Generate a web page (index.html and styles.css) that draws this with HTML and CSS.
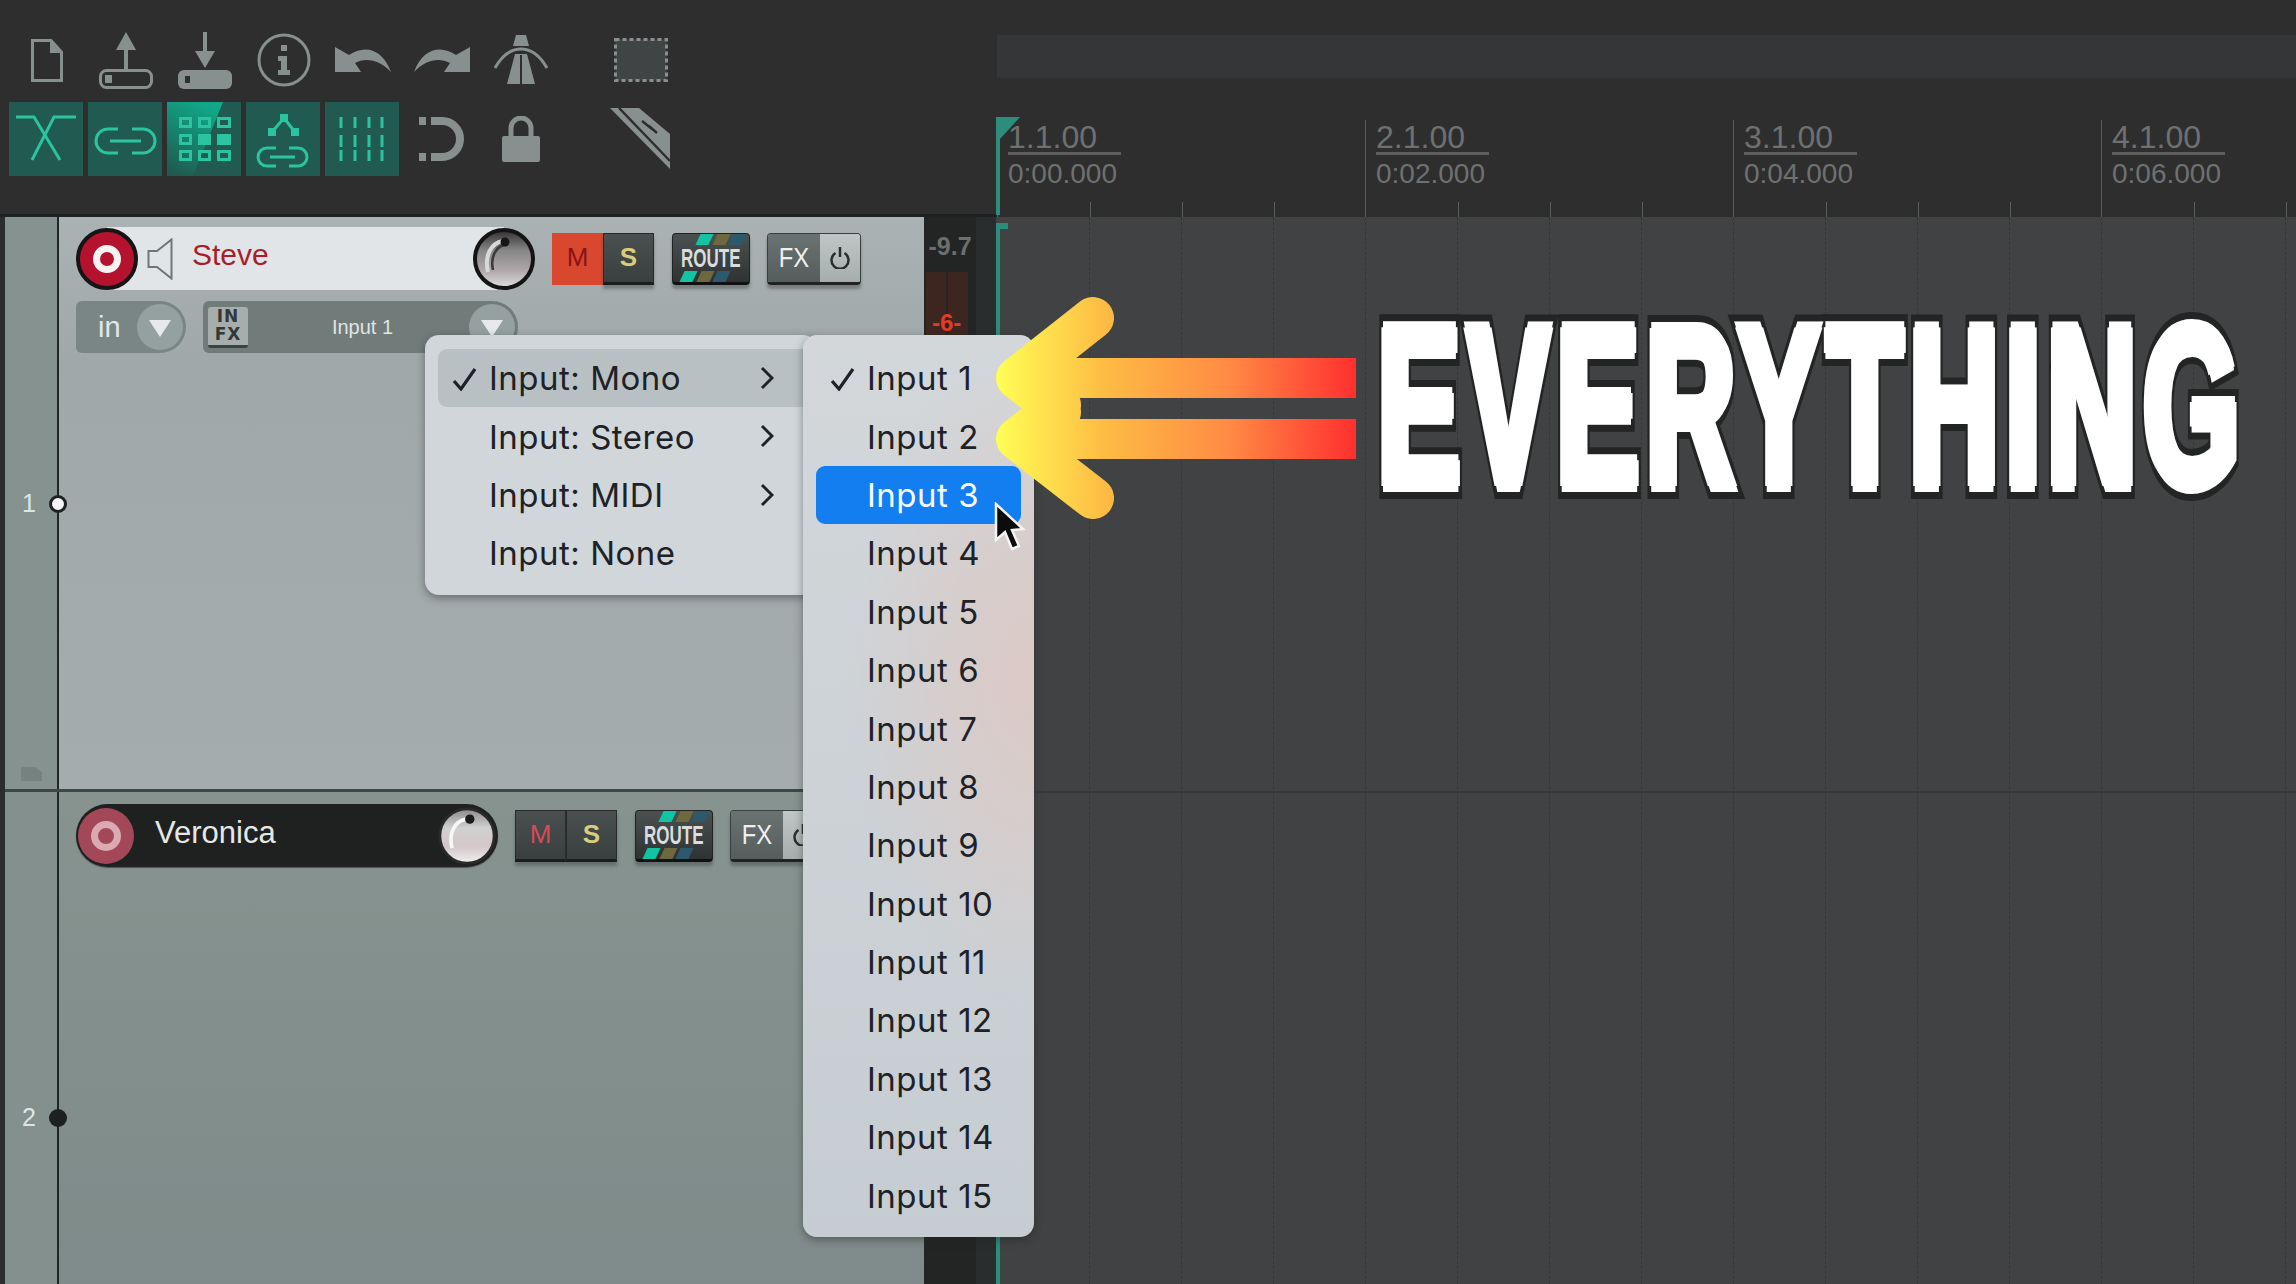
FILE: index.html
```html
<!DOCTYPE html>
<html lang="en">
<head>
    <meta charset="UTF-8">
    <title>Track input menu</title>
    <link rel="stylesheet" href="styles.css">
</head>
<body>

<div class="app">

    <div class="top">
        <div class="toolbar">
            <div class="tool-row">
                <div class="tool"><svg width="32" height="43" viewBox="0 0 32 43"><path d="M1.5 1.5H20L30.5 13V41.5H1.5Z" fill="none" stroke="#87908f" stroke-width="3"/><path d="M19 2V14H30Z" fill="#87908f"/></svg></div>
                <div class="tool"><svg width="54" height="57" viewBox="0 0 54 57"><path d="M27 0L37 18H29V37H25V18H17Z" fill="#87908f"/><rect x="1.5" y="38.5" width="51" height="17" rx="6" fill="none" stroke="#87908f" stroke-width="3"/><rect x="6" y="43" width="7" height="8" fill="#87908f"/></svg></div>
                <div class="tool"><svg width="54" height="57" viewBox="0 0 54 57"><path d="M25 0H29V19H37L27 36L17 19H25Z" fill="#87908f"/><rect y="38" width="54" height="19" rx="6" fill="#87908f"/><rect x="7" y="44" width="5" height="7" fill="#2e2e2e"/></svg></div>
                <div class="tool"><svg width="54" height="54" viewBox="0 0 54 54"><circle cx="27" cy="27" r="25" fill="none" stroke="#87908f" stroke-width="3"/><path d="M24 12h6v6h-6zM21 23h9v14h3v5H21v-5h3v-9h-3z" fill="#87908f"/></svg></div>
                <div class="tool"><svg width="56" height="26" viewBox="0 0 56 26"><path d="M0 0L14 8C28 -2 47 0 56 25C45 13 31 10 20 16L26 25H0Z" fill="#87908f"/></svg></div>
                <div class="tool"><svg width="56" height="26" viewBox="0 0 56 26"><path d="M56 0L42 8C28 -2 9 0 0 25C11 13 25 10 36 16L30 25H56Z" fill="#87908f"/></svg></div>
                <div class="tool"><svg width="54" height="50" viewBox="0 0 54 50"><path d="M22 0H32L35 11H19Z" fill="#87908f"/><path d="M1 33C9 19 17 14 27 14C37 14 45 19 53 33" fill="none" stroke="#87908f" stroke-width="3"/><path d="M21 19H33L41 49H13Z" fill="#87908f"/><rect x="26" y="20" width="2" height="29" fill="#2e2e2e"/></svg></div>
                <div class="tool tool-far"><svg width="54" height="44" viewBox="0 0 54 44"><rect x="1.5" y="1.5" width="51" height="41" fill="#404445" stroke="#87908f" stroke-width="3" stroke-dasharray="4 3"/></svg></div>
            </div>
            <div class="tool-row tool-row-b">
                <div class="tool on"><svg width="74" height="74" viewBox="0 0 74 74"><path d="M7 15H25L51 58M67 15H45L23 58" fill="none" stroke="#2ac4a0" stroke-width="3"/></svg></div>
                <div class="tool on"><svg width="74" height="74" viewBox="0 0 74 74"><path d="M30 27H20a12 12 0 0 0 0 24H30M44 27H55a12 12 0 0 1 0 24H44M22 39H53" fill="none" stroke="#2ac4a0" stroke-width="3"/></svg></div>
                <div class="tool on"><svg width="74" height="74" viewBox="0 0 74 74"><defs><linearGradient id="wedge" x1="0.6" y1="0" x2="0.2" y2="1"><stop offset="0" stop-color="#10a888"/><stop offset="1" stop-color="#10a888" stop-opacity="0"/></linearGradient></defs><path d="M0 0H56L26 74H0Z" fill="url(#wedge)"/><g fill="none" stroke="#2ac4a0" stroke-width="3"><rect x="13.5" y="16.5" width="10" height="8"/><rect x="32.5" y="16.5" width="10" height="8"/><rect x="51.5" y="16.5" width="11" height="8"/><rect x="13.5" y="33.5" width="10" height="8"/><rect x="13.5" y="49.5" width="10" height="8"/><rect x="32.5" y="49.5" width="10" height="8"/><rect x="51.5" y="49.5" width="11" height="8"/></g><rect x="31" y="32" width="13" height="11" fill="#2ac4a0"/><rect x="50" y="32" width="14" height="11" fill="#2ac4a0"/></svg></div>
                <div class="tool on"><svg width="74" height="74" viewBox="0 0 74 74"><path d="M26 30L38 16L49 30" fill="none" stroke="#2ac4a0" stroke-width="3"/><path d="M34 12h8v8h-8zM22 26h8v8h-8zM45 26h8v8h-8z" fill="#2ac4a0"/><path d="M30 46H21a9 9 0 0 0 0 18H30M43 46H52a9 9 0 0 1 0 18H43M24 55H49" fill="none" stroke="#2ac4a0" stroke-width="3"/></svg></div>
                <div class="tool on"><svg width="74" height="74" viewBox="0 0 74 74"><path d="M16 15V26M30 15V26M44 15V26M57 15V26M16 33V45M30 33V45M44 33V45M57 33V45M16 48V59M30 48V59M44 48V59M57 48V59" fill="none" stroke="#2ac4a0" stroke-width="3"/></svg></div>
                <div class="tool"><svg width="46" height="46" viewBox="0 0 46 46"><path d="M12 5H23a18 18 0 0 1 0 36H12" fill="none" stroke="#87908f" stroke-width="8"/><rect x="0" y="1" width="7" height="8" fill="#87908f"/><rect x="0" y="37" width="7" height="8" fill="#87908f"/></svg></div>
                <div class="tool"><svg width="38" height="46" viewBox="0 0 38 46"><path d="M9 22V12a10 10 0 0 1 20 0V22" fill="none" stroke="#87908f" stroke-width="5"/><rect y="20" width="38" height="26" rx="2" fill="#87908f"/></svg></div>
                <div class="tool tool-far"><svg width="62" height="62" viewBox="0 0 62 62"><path d="M0 0H29L60 26V61Z" fill="#87908f"/><path d="M9 0L60 53M42 21L32 13M47 25L39 18" fill="none" stroke="#2e2e2e" stroke-width="2.5"/></svg></div>
            </div>
        </div>

        <div class="timeline">
            <div class="band"></div>
            <div class="measures">
                <div class="measure">
                    <div class="label"><div class="bar-num">1.1.00</div><div class="bar-time">0:00.000</div></div>
                    <div class="ticks"><span></span><span></span><span></span></div>
                </div>
                <div class="measure">
                    <div class="label"><div class="bar-num">2.1.00</div><div class="bar-time">0:02.000</div></div>
                    <div class="ticks"><span></span><span></span><span></span></div>
                </div>
                <div class="measure">
                    <div class="label"><div class="bar-num">3.1.00</div><div class="bar-time">0:04.000</div></div>
                    <div class="ticks"><span></span><span></span><span></span></div>
                </div>
                <div class="measure">
                    <div class="label"><div class="bar-num">4.1.00</div><div class="bar-time">0:06.000</div></div>
                    <div class="ticks"><span></span><span></span><span></span></div>
                </div>
            </div>
            <svg class="flag" width="24" height="98" viewBox="0 0 24 98"><path d="M0 0H24L4 22V98H0Z" fill="#2c8d7c"/></svg>
        </div>
    </div>

    <div class="main">
        <div class="tcp">
            <!-- track 1 -->
            <div class="track track-one">
                <div class="strip">
                    <span class="track-num">1</span>
                    <span class="folder"></span>
                </div>
                <div class="panel">
                    <div class="strip-row">
                        <div class="name-pill">
                            <div class="rec"></div>
                            <svg class="speaker" width="26" height="42" viewBox="0 0 26 42"><path d="M1.5 13H10L24.5 1.5V40.5L10 29H1.5Z" fill="none" stroke="#6e7676" stroke-width="2"/></svg>
                            <span class="track-name">Steve</span>
                            <svg class="knob" width="62" height="62" viewBox="0 0 62 62">
                                <defs>
                                    <linearGradient id="steel" x1="0" y1="0" x2="0" y2="1"><stop offset="0" stop-color="#2f2f2f"/><stop offset="0.35" stop-color="#868686"/><stop offset="0.7" stop-color="#b0a8aa"/><stop offset="1" stop-color="#e0e0e0"/></linearGradient>
                                </defs>
                                <circle cx="31" cy="31" r="29" fill="url(#steel)" stroke="#141414" stroke-width="4"/>
                                <path d="M30 13C18 15 11 28 15 44" fill="none" stroke="#d8d8d8" stroke-width="4"/>
                                <path d="M31 17C23 19 17 29 20 42" fill="none" stroke="#3a3a3a" stroke-width="2.5"/>
                                <circle cx="32" cy="14" r="4.5" fill="#161616"/>
                            </svg>
                        </div>
                        <div class="btn-pair">
                            <div class="btn btn-m active">M</div>
                            <div class="btn btn-s">S</div>
                        </div>
                        <div class="btn-route"><i class="dash teal"></i><i class="dash olive"></i><i class="dash blue"></i><span>ROUTE</span><i class="dash low teal"></i><i class="dash low olive"></i><i class="dash low blue"></i></div>
                        <div class="btn-fx"><span class="fx-label"><b>FX</b></span><span class="fx-power"><svg width="20" height="22" viewBox="0 0 20 22"><path d="M5.5 6A8.5 8.5 0 1 0 14.5 6M10 0V10" fill="none" stroke="#2a2e2e" stroke-width="2.5"/></svg></span></div>
                    </div>
                    <div class="input-row">
                        <div class="in-pill">in<span class="drop"></span></div>
                        <div class="input-pill">
                            <div class="infx">IN<br>FX</div>
                            <span class="input-name">Input 1</span>
                            <span class="drop"></span>
                        </div>
                    </div>
                </div>
            </div>
            <!-- track 2 -->
            <div class="track track-two">
                <div class="strip">
                    <span class="track-num">2</span>
                </div>
                <div class="panel">
                    <div class="strip-row">
                        <div class="name-pill dark">
                            <div class="rec"></div>
                            <span class="track-name">Veronica</span>
                            <svg class="knob" width="58" height="58" viewBox="0 0 62 62">
                                <defs>
                                    <linearGradient id="silver" x1="0" y1="0" x2="0" y2="1"><stop offset="0" stop-color="#8a8a8a"/><stop offset="0.35" stop-color="#d0d0d0"/><stop offset="0.7" stop-color="#d4c8ca"/><stop offset="1" stop-color="#f0f0f0"/></linearGradient>
                                </defs>
                                <circle cx="31" cy="31" r="29" fill="url(#silver)" stroke="#2a2a2a" stroke-width="3"/>
                                <path d="M30 13C18 15 11 28 15 44" fill="none" stroke="#f6f6f6" stroke-width="4"/>
                                <circle cx="34" cy="13" r="5" fill="#1c1c1c"/>
                            </svg>
                        </div>
                        <div class="btn-pair">
                            <div class="btn btn-m">M</div>
                            <div class="btn btn-s">S</div>
                        </div>
                        <div class="btn-route"><i class="dash teal"></i><i class="dash olive"></i><i class="dash blue"></i><span>ROUTE</span><i class="dash low teal"></i><i class="dash low olive"></i><i class="dash low blue"></i></div>
                        <div class="btn-fx"><span class="fx-label"><b>FX</b></span><span class="fx-power"><svg width="20" height="22" viewBox="0 0 20 22"><path d="M5.5 6A8.5 8.5 0 1 0 14.5 6M10 0V10" fill="none" stroke="#2a2e2e" stroke-width="2.5"/></svg></span></div>
                    </div>
                </div>
            </div>
        </div>

        <div class="meter-col">
            <div class="readout">-9.7</div>
            <div class="meter">
                <span class="meter-side"></span><span class="meter-side"></span>
                <span class="meter-mark">-6-</span>
            </div>
        </div>

        <div class="arrange">
            <div class="beat"></div><div class="beat"></div><div class="beat"></div><div class="beat"></div>
            <div class="beat"></div><div class="beat"></div><div class="beat"></div><div class="beat"></div>
            <div class="beat"></div><div class="beat"></div><div class="beat"></div><div class="beat"></div>
            <div class="beat"></div><div class="beat"></div><div class="beat"></div>
            <div class="playhead"></div>
        </div>
    </div>

    <!-- track dots sit over the divider line -->
    <span class="dot dot-one"></span>
    <span class="dot dot-two"></span>

    <!-- popup menus -->
    <div class="menu menu-type">
        <div class="menu-item hover"><svg class="check" width="25" height="24" viewBox="0 0 25 24"><path d="M2 14L9 22L23 2" fill="none" stroke="#1e2226" stroke-width="3.2"/></svg><span>Input: Mono</span><svg class="chev" width="14" height="24" viewBox="0 0 14 24"><path d="M2 2L12 12L2 22" fill="none" stroke="#1e2226" stroke-width="3"/></svg></div>
        <div class="menu-item"><span>Input: Stereo</span><svg class="chev" width="14" height="24" viewBox="0 0 14 24"><path d="M2 2L12 12L2 22" fill="none" stroke="#1e2226" stroke-width="3"/></svg></div>
        <div class="menu-item"><span>Input: MIDI</span><svg class="chev" width="14" height="24" viewBox="0 0 14 24"><path d="M2 2L12 12L2 22" fill="none" stroke="#1e2226" stroke-width="3"/></svg></div>
        <div class="menu-item"><span>Input: None</span></div>
    </div>

    <div class="menu menu-inputs">
        <div class="menu-item"><svg class="check" width="25" height="24" viewBox="0 0 25 24"><path d="M2 14L9 22L23 2" fill="none" stroke="#1e2226" stroke-width="3.2"/></svg><span>Input 1</span></div>
        <div class="menu-item"><span>Input 2</span></div>
        <div class="menu-item selected"><span>Input 3</span></div>
        <div class="menu-item"><span>Input 4</span></div>
        <div class="menu-item"><span>Input 5</span></div>
        <div class="menu-item"><span>Input 6</span></div>
        <div class="menu-item"><span>Input 7</span></div>
        <div class="menu-item"><span>Input 8</span></div>
        <div class="menu-item"><span>Input 9</span></div>
        <div class="menu-item"><span>Input 10</span></div>
        <div class="menu-item"><span>Input 11</span></div>
        <div class="menu-item"><span>Input 12</span></div>
        <div class="menu-item"><span>Input 13</span></div>
        <div class="menu-item"><span>Input 14</span></div>
        <div class="menu-item"><span>Input 15</span></div>
    </div>

    <!-- thumbnail overlay: arrows + big word -->
    <svg class="arrows" width="400" height="260" viewBox="980 280 400 260">
        <defs>
            <linearGradient id="hot" gradientUnits="userSpaceOnUse" x1="995" y1="0" x2="1356" y2="0">
                <stop offset="0" stop-color="#ffff55"/>
                <stop offset="0.3" stop-color="#fdbc44"/>
                <stop offset="0.65" stop-color="#ff8a45"/>
                <stop offset="1" stop-color="#ff2f2f"/>
            </linearGradient>
        </defs>
        <path d="M1040 358H1356V398H1040ZM1040 419H1356V459H1040Z" fill="url(#hot)"/>
        <path d="M1093 318L1017 378L1060 412M1093 498L1017 439L1060 405" fill="none" stroke="url(#hot)" stroke-width="42" stroke-linecap="round" stroke-linejoin="round"/>
    </svg>
    <svg class="cursor" width="32" height="50" viewBox="0 0 32 50"><path d="M2 2V38L11 30L18 47L25 44L18 28L29 27Z" fill="#0c0c0c" stroke="#f4f4f4" stroke-width="2.5"/></svg>

    <div class="headline" data-text="EVERYTHING"><span>EVERYTHING</span></div>
</div>

</body>
</html>
```

FILE: styles.css
```css
body {
    margin: 0;
    background: #2e2e2e;
    font-family: "Liberation Sans", Arial, sans-serif;
}

.app {
    position: relative;
    width: 2296px;
    height: 1284px;
    overflow: hidden;
    display: grid;
    grid-template-rows: 217px 1fr;
    background: #2e2f2f;
}

/* top area */
.top {
    display: flex;
    background: #2e2e2e;
}

.toolbar {
    width: 997px;
    flex: none;
    padding: 28px 0 0 7px;
    box-sizing: border-box;
    border-bottom: 3px solid #1f2222;
}

.tool-row {
    display: flex;
    height: 64px;
    align-items: center;
}

.tool-row-b {
    margin-top: 10px;
    height: 74px;
}

.tool {
    width: 79px;
    flex: none;
    display: flex;
    align-items: center;
    justify-content: center;
}

.tool.on {
    width: 74px;
    height: 74px;
    margin: 0 3px 0 2px;
    background: #205a50;
}

.tool-far {
    margin-left: 41px;
}

.timeline {
    position: relative;
    flex: 1;
    padding-top: 35px;
}

.band {
    height: 43px;
    background: #353637;
}

.measures {
    display: flex;
    margin-top: 42px;
    height: 97px;
}

.measure {
    width: 368px;
    flex: none;
    box-sizing: border-box;
    border-left: 1px solid #5c5d5d;
    padding-left: 10px;
    display: flex;
    flex-direction: column;
    justify-content: space-between;
}

.label {
    width: 113px;
    color: #6f7070;
}

.bar-num {
    font-size: 32px;
    line-height: 34px;
    height: 32px;
    border-bottom: 3px solid #5e5e5e;
}

.bar-time {
    font-size: 28px;
    line-height: 32px;
    margin-top: 3px;
}

.ticks {
    display: flex;
    margin-left: 82px;
    height: 15px;
}

.ticks span {
    width: 91px;
    flex: none;
    border-left: 1px solid #5c5d5d;
}

.flag {
    position: absolute;
    left: -1px;
    top: 117px;
    display: block;
}

/* main area */
.main {
    display: flex;
    padding-left: 5px;
    min-height: 0;
    background: #2a2d2d;
}

.tcp {
    width: 919px;
    flex: none;
    display: flex;
    flex-direction: column;
}

.track {
    display: flex;
}

.track-one {
    height: 575px;
    border-bottom: 3px solid #3d4747;
    box-sizing: border-box;
}

.track-two {
    flex: 1;
}

.strip {
    position: relative;
    width: 52px;
    flex: none;
    background: #86928f;
    border-right: 2px solid #1e2626;
}

.track-two .strip {
    background: #83908e;
}

.track-num {
    position: absolute;
    left: 17px;
    color: #dfe5e4;
    font-size: 25px;
}

.track-one .track-num {
    top: 272px;
}

.track-two .track-num {
    top: 311px;
}

.folder {
    position: absolute;
    left: 16px;
    top: 550px;
    width: 21px;
    height: 14px;
    background: #76827f;
    clip-path: polygon(0 0, 65% 0, 100% 35%, 100% 100%, 0 100%);
}

.panel {
    flex: 1;
    padding: 10px 0 0 17px;
}

.track-one .panel {
    background: linear-gradient(#aab2b3, #a0a8a9 25%, #a5acad);
}

.track-two .panel {
    background: linear-gradient(#87938f, #7f8b8a);
    padding-top: 12px;
}

.strip-row {
    display: flex;
    align-items: center;
    height: 63px;
}

.name-pill {
    position: relative;
    width: 460px;
    height: 63px;
    flex: none;
    display: flex;
    align-items: center;
    background: linear-gradient(90deg, transparent 31px, #e2e5e7 31px, #e2e5e7 428px, transparent 428px);
}

.name-pill.dark {
    width: 422px;
    background: #1f2120;
    border-radius: 32px;
    box-shadow: 0 1px 1px #555;
}

.rec {
    position: relative;
    width: 62px;
    height: 62px;
    flex: none;
    box-sizing: border-box;
    border-radius: 50%;
    background: #b5122f;
    border: 4px solid #151515;
}

.rec::after {
    content: "";
    position: absolute;
    left: 13px;
    top: 13px;
    width: 28px;
    height: 28px;
    box-sizing: border-box;
    border-radius: 50%;
    border: 7px solid #f6f2f2;
}

.dark .rec {
    width: 56px;
    height: 56px;
    margin-left: 2px;
    background: #a24858;
    border: none;
}

.dark .rec::after {
    left: 13px;
    top: 13px;
    width: 30px;
    height: 30px;
    border-color: #dba9b2;
}

.speaker {
    margin-left: 9px;
    flex: none;
}

.track-name {
    margin-left: 19px;
    font-size: 30px;
    color: #a61f2b;
    position: relative;
    top: -4px;
}

.dark .track-name {
    margin-left: 21px;
    font-size: 31px;
    color: #e6e8e6;
    top: -3px;
}

.knob {
    flex: none;
    margin-left: auto;
    margin-right: 1px;
}

.dark .knob {
    margin-right: 2px;
}

.track-one .btn-pair {
    margin-left: 16px;
}

.track-two .btn-pair {
    margin-left: 17px;
}

.btn-pair {
    display: flex;
    flex: none;
}

.btn {
    box-sizing: border-box;
    height: 52px;
    width: 51px;
    display: flex;
    align-items: center;
    justify-content: center;
    font-size: 26px;
    background: linear-gradient(#4a5050, #3a3f3f);
    border: 1px solid #262a2a;
    border-bottom: 3px solid #1a1d1d;
    box-shadow: 0 4px 3px rgba(60, 70, 70, .45);
}

.btn-m {
    color: #d84a58;
}

.btn-m.active {
    background: #d9472f;
    border-color: #d9472f;
    color: #8a1414;
    box-shadow: none;
}

.btn-s {
    color: #d9cc7c;
    font-weight: bold;
}

.btn-route {
    position: relative;
    box-sizing: border-box;
    width: 78px;
    height: 52px;
    flex: none;
    margin-left: 18px;
    border-radius: 4px;
    background: linear-gradient(#4b5151, #2e3232);
    border: 1px solid #222;
    border-bottom: 3px solid #111;
    box-shadow: 0 4px 3px rgba(60, 70, 70, .45);
    display: flex;
    align-items: center;
    justify-content: center;
    color: #d9dddd;
    font-weight: bold;
    font-size: 25px;
}

.btn-route span {
    display: inline-block;
    transform: scaleX(.68);
    margin: 2px -20px 0;
}

.dash {
    position: absolute;
    top: 0;
    width: 13px;
    height: 11px;
    transform: skewX(-25deg);
}

.dash.low {
    top: auto;
    bottom: 0;
}

.dash.teal { left: 25px; background: #12c4a4; }
.dash.olive { left: 42px; background: #6d6840; }
.dash.blue { left: 58px; background: #2c5a6c; }
.dash.low.teal { left: 9px; }
.dash.low.olive { left: 26px; }
.dash.low.blue { left: 42px; }

.btn-fx {
    box-sizing: border-box;
    width: 94px;
    height: 52px;
    flex: none;
    margin-left: 17px;
    display: flex;
    border-radius: 4px;
    border: 1px solid #3a4040;
    border-bottom: 3px solid #222;
    overflow: hidden;
    box-shadow: 0 4px 3px rgba(60, 70, 70, .45);
}

.fx-label {
    width: 52px;
    display: flex;
    align-items: center;
    justify-content: center;
    background: linear-gradient(#6a7272, #565d5d);
    color: #eef0f0;
    font-size: 28px;
}

.fx-label b {
    font-weight: normal;
    transform: scaleX(.85);
}

.fx-power {
    flex: 1;
    display: flex;
    align-items: center;
    justify-content: center;
    background: linear-gradient(#c0c6c6, #a6adad);
}

.input-row {
    display: flex;
    gap: 17px;
    margin-top: 11px;
}

.in-pill {
    box-sizing: border-box;
    width: 110px;
    height: 52px;
    display: flex;
    align-items: center;
    justify-content: space-between;
    padding: 0 3px 0 22px;
    border-radius: 6px 26px 26px 6px;
    background: #7a8585;
    color: #e2e6e6;
    font-size: 29px;
}

.drop {
    position: relative;
    width: 46px;
    height: 46px;
    flex: none;
    border-radius: 50%;
    background: #95a0a0;
}

.drop::after {
    content: "";
    position: absolute;
    left: 12px;
    top: 16px;
    border-left: 11px solid transparent;
    border-right: 11px solid transparent;
    border-top: 17px solid #e6eaea;
}

.input-pill {
    box-sizing: border-box;
    width: 315px;
    height: 52px;
    display: flex;
    align-items: center;
    padding: 0 3px 0 5px;
    border-radius: 6px 26px 26px 6px;
    background: #707b7a;
}

.infx {
    box-sizing: border-box;
    width: 40px;
    height: 41px;
    flex: none;
    border-radius: 3px;
    background: #a5adad;
    border-bottom: 3px solid #3c4242;
    color: #333838;
    font-size: 17px;
    font-weight: bold;
    line-height: 18px;
    text-align: center;
    letter-spacing: 1px;
    font-family: "DejaVu Sans", sans-serif;
}

.input-name {
    flex: 1;
    padding-left: 8px;
    text-align: center;
    color: #e0e4e4;
    font-size: 20px;
}

/* meter */
.meter-col {
    width: 52px;
    flex: none;
    background: #232524;
    margin-right: 20px;
    display: flex;
    flex-direction: column;
}

.readout {
    height: 55px;
    padding-top: 15px;
    box-sizing: border-box;
    text-align: center;
    color: #6c6f6e;
    font-size: 25px;
    font-weight: bold;
}

.meter {
    position: relative;
    display: flex;
    gap: 2px;
    height: 66px;
    padding: 0 8px 0 2px;
}

.meter-side {
    flex: 1;
    background: #3d2620;
}

.meter-mark {
    position: absolute;
    left: 8px;
    top: 37px;
    color: #e23a24;
    font-size: 24px;
    font-weight: bold;
}

/* arrange */
.arrange {
    position: relative;
    flex: 1;
    display: flex;
    padding-left: 2px;
    background: linear-gradient(#38393a, #38393a) 0 574px / 100% 2px no-repeat, #414243;
}

.beat {
    width: 92px;
    flex: none;
    box-sizing: border-box;
    border-right: 1px dashed #363738;
}

.playhead {
    position: absolute;
    left: 0;
    top: 6px;
    bottom: 0;
    width: 4px;
    background: #2c8d7c;
}

.playhead::after {
    content: "";
    position: absolute;
    left: 0;
    top: 0;
    width: 12px;
    height: 6px;
    background: #2c8d7c;
}

/* dots */
.dot {
    position: absolute;
    left: 49px;
    width: 18px;
    height: 18px;
    box-sizing: border-box;
    border-radius: 50%;
}

.dot-one {
    top: 495px;
    background: #f4f6f6;
    border: 3px solid #1c2222;
}

.dot-two {
    top: 1109px;
    background: #1c2020;
}

/* menus */
.menu {
    position: absolute;
    top: 335px;
    box-sizing: border-box;
    border-radius: 14px;
    box-shadow: 0 3px 8px rgba(30, 35, 35, .45);
    font-family: Inter, "Liberation Sans", sans-serif;
    font-size: 33px;
    letter-spacing: .5px;
    color: #1e2226;
}

.menu-type {
    left: 425px;
    width: 392px;
    height: 260px;
    padding: 14px 0 0 13px;
    background: #d0d6da;
}

.menu-inputs {
    left: 803px;
    width: 231px;
    height: 902px;
    padding: 14px 13px;
    background: radial-gradient(ellipse 190px 330px at 100% 38%, #dcc9c5, rgba(220, 201, 197, 0)), linear-gradient(#d3d7da, #c6cdd2);
}

.menu-item {
    position: relative;
    display: flex;
    align-items: center;
    height: 58.4px;
    padding-left: 51px;
    box-sizing: border-box;
    border-radius: 9px;
}

.menu-item.hover {
    background: #b9c0c4;
}

.menu-item.selected {
    background: #127ef0;
    color: #f6faff;
}

.check {
    position: absolute;
    left: 14px;
    top: 18px;
}

.chev {
    position: absolute;
    right: 43px;
    top: 17px;
}

/* overlay */
.arrows {
    position: absolute;
    left: 980px;
    top: 280px;
}

.cursor {
    position: absolute;
    left: 994px;
    top: 502px;
}

.headline {
    position: absolute;
    left: 1378px;
    top: 297px;
    font-family: "Liberation Sans", sans-serif;
    font-weight: bold;
    font-size: 230px;
    line-height: 220px;
    letter-spacing: 14px;
    white-space: nowrap;
    transform: scaleX(.534);
    transform-origin: left top;
    color: #fff;
}

.headline span {
    position: relative;
    -webkit-text-stroke: 12px #fff;
    text-shadow: 2px 0 #fff, -2px 0 #fff, 4px 0 #fff, -4px 0 #fff, 6px 0 #fff, -6px 0 #fff, 9px 0 #fff, -9px 0 #fff;
}

.headline::before {
    content: attr(data-text);
    position: absolute;
    left: 0;
    top: 0;
    color: #232525;
    -webkit-text-stroke: 26px #232525;
    text-shadow: 4px 0 #232525, -4px 0 #232525, 8px 0 #232525, -8px 0 #232525, 12px 0 #232525, -12px 0 #232525;
}
```
